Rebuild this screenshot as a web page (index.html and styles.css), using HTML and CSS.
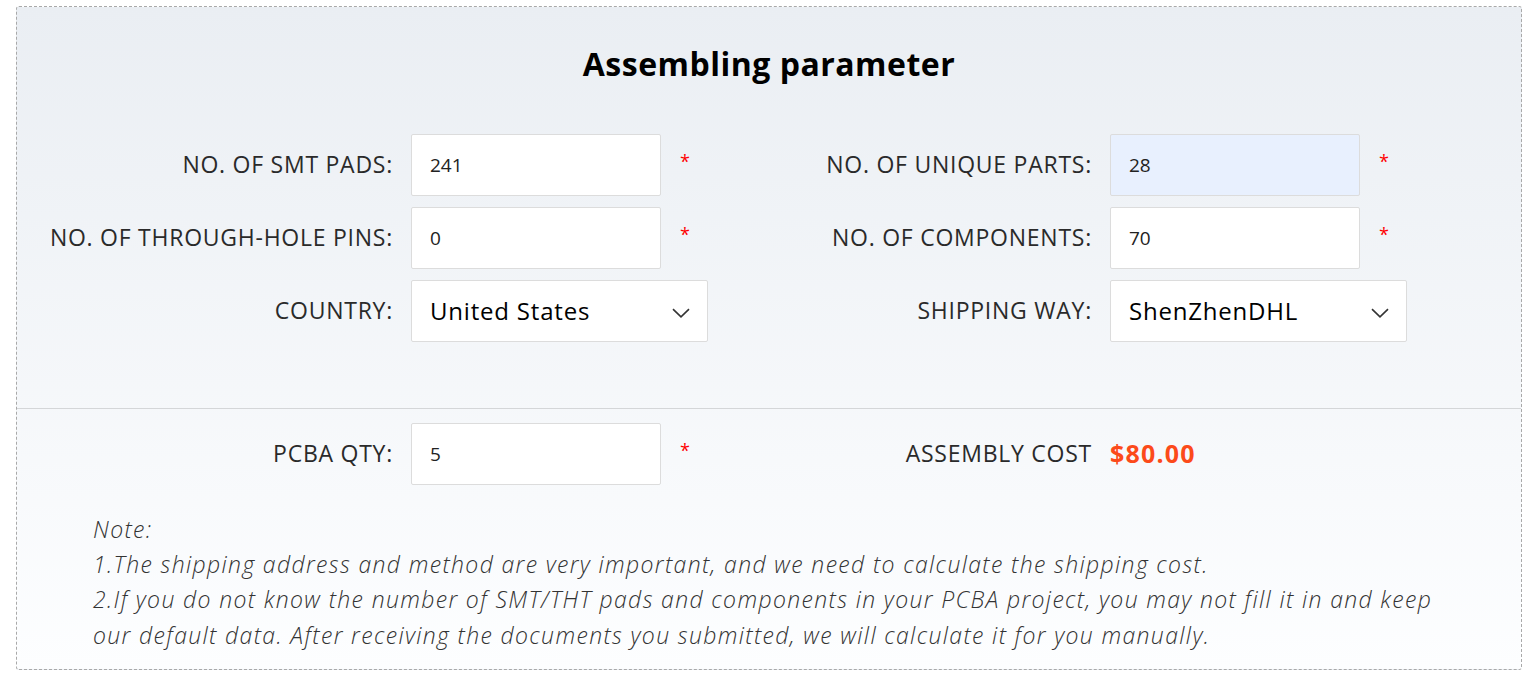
FILE: index.html
```html
<!DOCTYPE html>
<html lang="en">
<head>
<meta charset="utf-8">
<title>Assembling parameter</title>
<link rel="stylesheet" href="styles.css">
</head>
<body>
<div class="panel">
  <section class="params">
    <h2 class="title">Assembling parameter</h2>
    <div class="row">
      <div class="field">
        <label class="label">NO. OF SMT PADS:</label>
        <div class="input">241</div>
        <span class="req">*</span>
      </div>
      <div class="field">
        <label class="label">NO. OF UNIQUE PARTS:</label>
        <div class="input input-filled">28</div>
        <span class="req">*</span>
      </div>
    </div>
    <div class="row">
      <div class="field">
        <label class="label">NO. OF THROUGH-HOLE PINS:</label>
        <div class="input">0</div>
        <span class="req">*</span>
      </div>
      <div class="field">
        <label class="label">NO. OF COMPONENTS:</label>
        <div class="input">70</div>
        <span class="req">*</span>
      </div>
    </div>
    <div class="row">
      <div class="field">
        <label class="label">COUNTRY:</label>
        <div class="select"><span>United States</span>
          <svg class="chev" width="18" height="10" viewBox="0 0 18 10"><path d="M1 1.2 L9 8.8 L17 1.2" fill="none" stroke="#333" stroke-width="1.6"/></svg>
        </div>
      </div>
      <div class="field">
        <label class="label">SHIPPING WAY:</label>
        <div class="select"><span>ShenZhenDHL</span>
          <svg class="chev" width="18" height="10" viewBox="0 0 18 10"><path d="M1 1.2 L9 8.8 L17 1.2" fill="none" stroke="#333" stroke-width="1.6"/></svg>
        </div>
      </div>
    </div>
  </section>
  <section class="result">
    <div class="row">
      <div class="field">
        <label class="label">PCBA QTY:</label>
        <div class="input">5</div>
        <span class="req">*</span>
      </div>
      <div class="field">
        <label class="label">ASSEMBLY COST</label>
        <span class="price">$80.00</span>
      </div>
    </div>
    <div class="note">
      <p>Note:</p>
      <p>1.The shipping address and method are very important, and we need to calculate the shipping cost.</p>
      <p>2.If you do not know the number of SMT/THT pads and components in your PCBA project, you may not fill it in and keep<br>our default data. After receiving the documents you submitted, we will calculate it for you manually.</p>
    </div>
  </section>
</div>
</body>
</html>
```

FILE: styles.css
```css
* { box-sizing: border-box; }
html, body { margin: 0; padding: 0; background: #fff; }
body { font-family: "Open Sans", "Liberation Sans", sans-serif; color: #333; }

.panel {
  margin: 6px 5px 0 16px;
  border: 1px dashed #a9a9a9;
  border-radius: 3px;
  background: linear-gradient(#eaeef3, #fdfeff);
}

.params {
  padding: 37px 0 66px;
  border-bottom: 1px solid #d4d6d8;
}

.title {
  margin: 0 0 50px;
  text-align: center;
  font-weight: 700;
  font-size: 32px;
  letter-spacing: 0.5px;
  line-height: 40px;
  color: #000;
}

.row { display: flex; height: 62px; margin-bottom: 11px; }
.params .row:last-child { margin-bottom: 0; }

.field { display: flex; align-items: center; width: 699px; }

.label {
  width: 376px;
  margin-right: 18px;
  padding-bottom: 3px;
  text-align: right;
  font-size: 23px;
  letter-spacing: 0.75px;
  color: #2a2a2a;
  white-space: nowrap;
}

.input {
  width: 250px;
  height: 62px;
  padding-left: 18px;
  padding-bottom: 1px;
  display: flex;
  align-items: center;
  background: #fff;
  border: 1px solid #dcdcdc;
  border-radius: 2px;
  font-size: 19px;
  color: #222;
}
.input-filled { background: #e8f0fe; }

.req {
  margin-left: 19px;
  margin-top: -8px;
  color: #f00;
  font-size: 18px;
}

.select {
  width: 297px;
  height: 62px;
  padding: 0 17px 2px 18px;
  display: flex;
  align-items: center;
  justify-content: space-between;
  background: #fff;
  border: 1px solid #dcdcdc;
  border-radius: 2px;
  font-size: 24px;
  letter-spacing: 0.8px;
  color: #000;
}
.chev { margin-top: 5px; }

.result { padding: 14px 0 16px; }
.result .row { margin-bottom: 27px; }

.price {
  padding-bottom: 3px;
  color: #fc4a1a;
  font-weight: 700;
  font-size: 25px;
  letter-spacing: 1.2px;
}

.note {
  padding-left: 76px;
  font-style: italic;
  font-weight: 300;
  font-size: 23px;
  letter-spacing: 1.35px;
  line-height: 35.2px;
  color: #333;
}
.note p { margin: 0; }
```
